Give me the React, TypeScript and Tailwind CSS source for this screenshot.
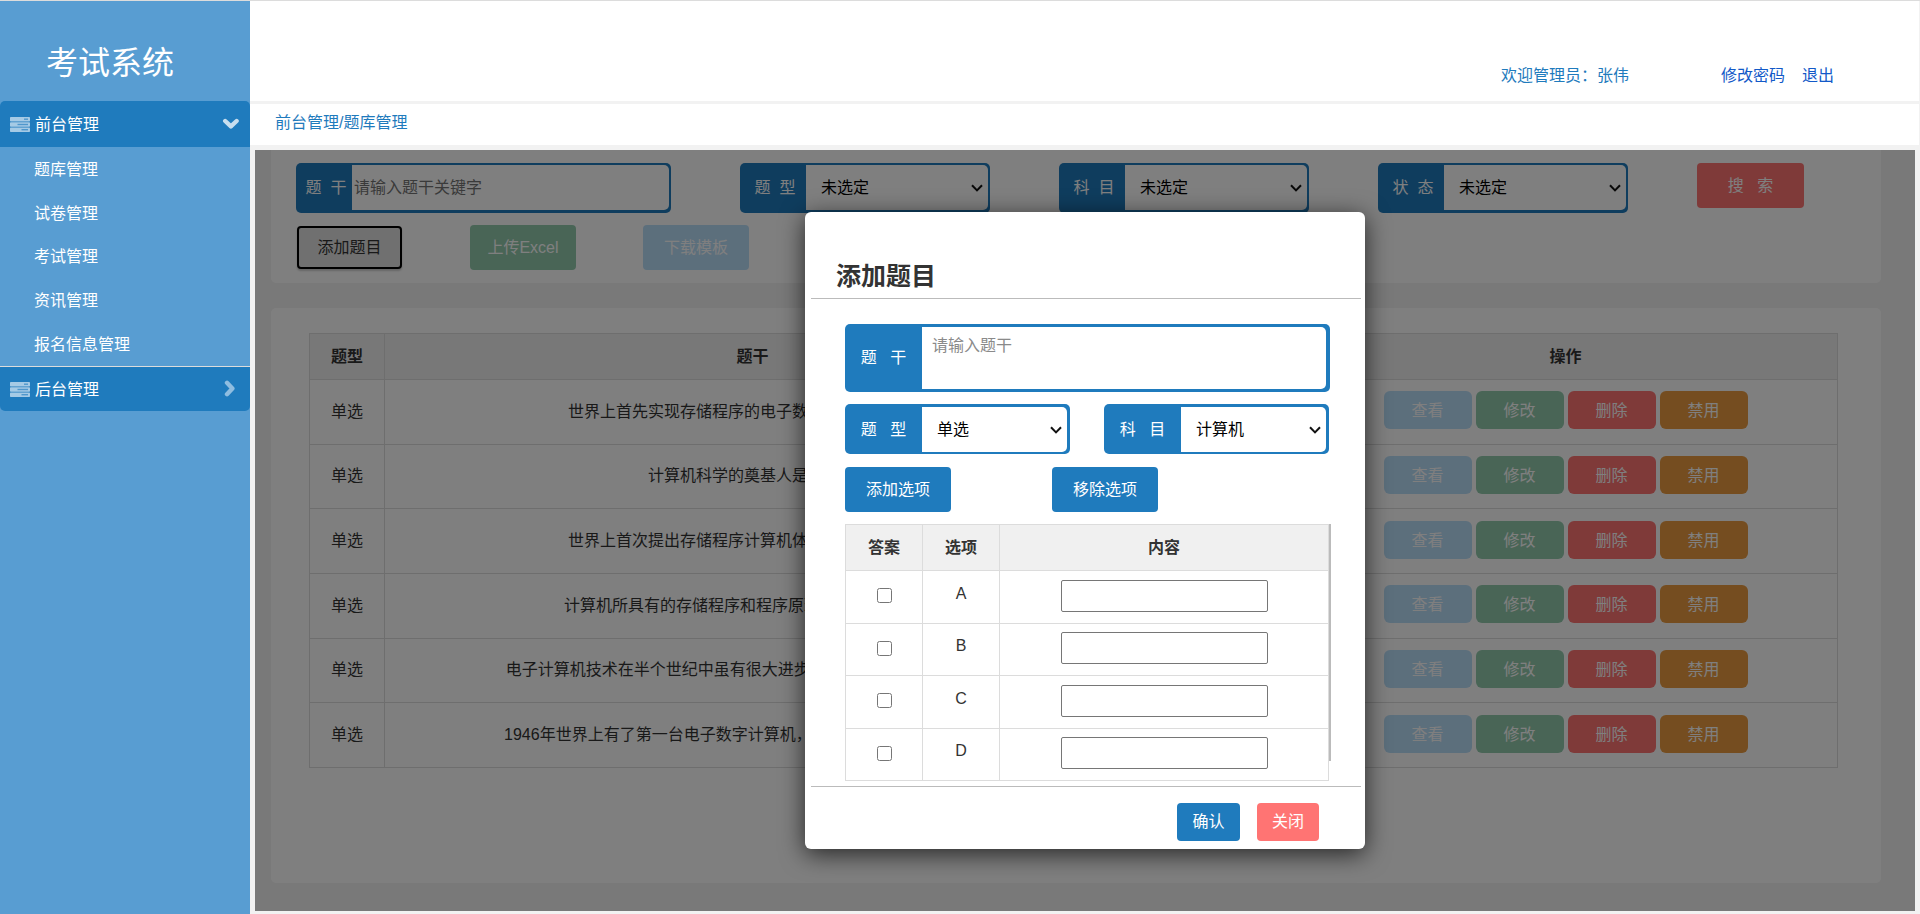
import React, { useState } from 'react';

const menuItems = ['题库管理', '试卷管理', '考试管理', '资讯管理', '报名信息管理'];

const questions = [
  { id: 1, type: '单选', title: '世界上首先实现存储程序的电子数字计算机是（\u00a0\u00a0）。' },
  { id: 2, type: '单选', title: '计算机科学的奠基人是（\u00a0\u00a0）。' },
  { id: 3, type: '单选', title: '世界上首次提出存储程序计算机体系结构的是（\u00a0\u00a0）。' },
  { id: 4, type: '单选', title: '计算机所具有的存储程序和程序原理是（\u00a0\u00a0）提出的。' },
  { id: 5, type: '单选', title: '电子计算机技术在半个世纪中虽有很大进步，至今其运行仍遵循着一...' },
  { id: 6, type: '单选', title: '1946年世界上有了第一台电子数字计算机，奠定了至今仍然在使用的...' }
];

const ServerIcon: React.FC = () => (
  <svg width="20" height="15" viewBox="0 0 20 15" className="shrink-0">
    <g fill="#a5cae5">
      <rect x="0" y="0" width="20" height="4.5" rx="0.7" />
      <rect x="0" y="5.2" width="20" height="4.5" rx="0.7" />
      <rect x="0" y="10.5" width="20" height="4.5" rx="0.7" />
    </g>
    <g fill="#4f97cc">
      <rect x="14" y="1.5" width="4" height="1.4" />
      <rect x="7.5" y="6.8" width="10.5" height="1.4" />
      <rect x="11.5" y="12" width="6.5" height="1.4" />
    </g>
  </svg>
);

const ChevronDown: React.FC = () => (
  <svg width="18" height="12" viewBox="0 0 18 12" fill="none" stroke="#c7deef" strokeWidth="4.4">
    <path d="M3.2 3 L8.9 8.4 L14.6 3" strokeLinecap="round" strokeLinejoin="round" />
  </svg>
);

const ChevronRight: React.FC = () => (
  <svg width="12" height="18" viewBox="0 0 12 18" fill="none" stroke="#8fbde0" strokeWidth="4.4">
    <path d="M3 2.8 L8.4 8.5 L3 14.2" strokeLinecap="round" strokeLinejoin="round" />
  </svg>
);

const SelectBox: React.FC<{ id: string; options: string[] }> = ({ id, options }) => (
  <div className="relative min-w-0 flex-1">
    <select id={id} className="h-full w-full appearance-none rounded-r-[5px] bg-white pl-[15px] text-black">
      {options.map(o => <option key={o}>{o}</option>)}
    </select>
    <svg width="12" height="8" viewBox="0 0 12 8" className="pointer-events-none absolute top-1/2 right-[5px] -mt-1" fill="none" stroke="#111" strokeWidth="2">
      <path d="M1 1.2 L6 6.4 L11 1.2" />
    </svg>
  </div>
);

const FilterSelect: React.FC<{ id: string; label: string }> = ({ id, label }) => (
  <div className="flex h-[50px] w-[250px] rounded-[5px] bg-[#1f7bbd] pt-[2px] pr-[2px] pb-[3px]">
    <label htmlFor={id} className="flex w-[66px] shrink-0 items-center justify-center pl-1 whitespace-pre text-white">{label}</label>
    <SelectBox id={id} options={['未选定']} />
  </div>
);

const ModalSelect: React.FC<{ id: string; label: string; options: string[] }> = ({ id, label, options }) => (
  <div className="flex h-[50px] w-[225px] rounded-[5px] bg-[#1f7bbd] pt-[3px] pr-[3px] pb-[2px]">
    <label htmlFor={id} className="flex w-[77px] shrink-0 items-center justify-center whitespace-pre text-white">{label}</label>
    <SelectBox id={id} options={options} />
  </div>
);

const Sidebar: React.FC = () => (
  <aside className="w-[250px] shrink-0 bg-[#589dd2] text-white">
    <h1 className="flex h-[100px] items-center pt-6 pl-[46px] text-[32px]">考试系统</h1>
    <nav>
      <button className="flex h-[46px] w-full items-center rounded-t-[5px] bg-[#1f7bbd] pr-[10px] pl-[10px]">
        <ServerIcon />
        <span className="ml-[5px] flex-1 pt-[2px] text-left">前台管理</span>
        <ChevronDown />
      </button>
      <ul className="grid h-[219px] auto-rows-fr">
        {menuItems.map(item => (
          <li key={item} className="flex items-center pt-[2px] pl-[34px]">
            <a href="#">{item}</a>
          </li>
        ))}
      </ul>
      <button className="flex h-[45px] w-full items-center rounded-b-[5px] border-t border-[#dcdcdc] bg-[#1f7bbd] pr-[14px] pl-[10px]">
        <ServerIcon />
        <span className="ml-[5px] flex-1 pt-[2px] text-left">后台管理</span>
        <ChevronRight />
      </button>
    </nav>
  </aside>
);

const QuestionTable: React.FC = () => (
  <table className="h-[435px] w-full table-fixed border-collapse text-center text-[#333]">
    <colgroup>
      <col className="w-[75px]" />
      <col />
      <col className="w-[87px]" />
      <col className="w-[86px]" />
      <col className="w-[544px]" />
    </colgroup>
    <thead>
      <tr className="h-[46px] bg-[#f0f0f0]">
        {['题型', '题干', '科目', '状态', '操作'].map(h => (
          <th key={h} className="border border-[#dcdcdc] font-bold">{h}</th>
        ))}
      </tr>
    </thead>
    <tbody>
      {questions.map(q => (
        <tr key={q.id}>
          <td className="border border-[#dcdcdc]">{q.type}</td>
          <td className="border border-[#dcdcdc] whitespace-nowrap">{q.title}</td>
          <td className="border border-[#dcdcdc]">计算机</td>
          <td className="border border-[#dcdcdc]">启用</td>
          <td className="border border-[#dcdcdc] pb-[3px]">
            <div className="flex justify-center gap-1 text-white">
              <button className="h-[38px] w-[88px] rounded-md bg-[#b9def9] pt-[2px]">查看</button>
              <button className="h-[38px] w-[88px] rounded-md bg-[#92caad] pt-[2px]">修改</button>
              <button className="h-[38px] w-[88px] rounded-md bg-[#ff7473] pt-[2px]">删除</button>
              <button className="h-[38px] w-[88px] rounded-md bg-[#ea9a40] pt-[2px]">禁用</button>
            </div>
          </td>
        </tr>
      ))}
    </tbody>
  </table>
);

const AddQuestionModal: React.FC<{ onClose: () => void }> = ({ onClose }) => {
  const [options, setOptions] = useState(['A', 'B', 'C', 'D']);

  const addOption = () => setOptions([...options, String.fromCharCode(65 + options.length)]);

  return (
    <div role="dialog" aria-labelledby="modal-title" className="h-fit w-[560px] rounded-md bg-white pr-1 pb-2 pl-[6px] text-[#333] shadow-[0_5px_25px_rgba(0,0,0,0.7)]">
      <h2 id="modal-title" className="flex h-[87px] items-end border-b border-[#bbb] pb-[6px] pl-[25px] text-[25px] leading-8 font-bold">添加题目</h2>
      <div className="pt-[25px] pr-[30px] pb-[5px] pl-[34px]">
        <div className="mr-px flex h-[68px] rounded-[5px] bg-[#1f7bbd] py-[3px] pr-[4px]">
          <label htmlFor="stem" className="flex w-[77px] shrink-0 items-center justify-center whitespace-pre text-white">{'题   干'}</label>
          <textarea id="stem" placeholder="请输入题干" className="min-w-0 flex-1 resize-none rounded-r-[5px] bg-white px-[10px] py-[7px] placeholder:text-[#8a8a8a]" />
        </div>
        <div className="mt-3 mr-[2px] flex justify-between">
          <ModalSelect id="type" label={'题   型'} options={['单选', '多选', '判断']} />
          <ModalSelect id="subject" label={'科   目'} options={['计算机']} />
        </div>
        <div className="mt-[13px] flex gap-[101px] text-white">
          <button onClick={addOption} className="h-[45px] w-[106px] rounded bg-[#1f7bbd]">添加选项</button>
          <button onClick={() => setOptions(options.slice(0, -1))} className="h-[45px] w-[106px] rounded bg-[#1f7bbd]">移除选项</button>
        </div>
        <div className="mt-3 flex items-start">
          <table className="h-[257px] min-w-0 flex-1 table-fixed border-collapse text-center">
            <colgroup>
              <col className="w-[77px]" />
              <col className="w-[77px]" />
              <col />
            </colgroup>
            <thead>
              <tr className="h-[46px] bg-[#f0f0f0]">
                {['答案', '选项', '内容'].map(h => (
                  <th key={h} className="border border-[#dcdcdc] font-bold">{h}</th>
                ))}
              </tr>
            </thead>
            <tbody>
              {options.map(o => (
                <tr key={o}>
                  <td className="border border-[#dcdcdc] pb-[2px]">
                    <input type="checkbox" aria-label={`答案${o}`} className="mx-auto block h-[15px] w-[15px]" />
                  </td>
                  <td className="border border-[#dcdcdc] pb-[6px]">{o}</td>
                  <td className="border border-[#dcdcdc] pb-[2px]">
                    <input type="text" aria-label={`内容${o}`} className="mx-auto block h-8 w-[207px] rounded-[2px] border border-[#767676] px-1" />
                  </td>
                </tr>
              ))}
            </tbody>
          </table>
          <div className="h-[237px] w-[2px] bg-[#bbb]" />
        </div>
      </div>
      <div className="flex justify-end gap-[17px] border-t border-[#bbb] pt-4 pr-[42px] text-white">
        <button className="h-[38px] w-[63px] rounded bg-[#1f7bbd]">确认</button>
        <button onClick={onClose} className="h-[38px] w-[62px] rounded bg-[#ff7473]">关闭</button>
      </div>
    </div>
  );
};

export default function App() {
  const [isModalOpen, setIsModalOpen] = useState(true);

  return (
    <div className="flex min-h-screen border-t border-[#dcdcdc] bg-[#f2f2f2] font-['Liberation_Sans','Noto_Sans_CJK_SC',sans-serif] text-base">
      <Sidebar />
      <div className="flex min-w-0 flex-1 flex-col">
        <header className="mr-px flex h-[100px] items-end justify-end bg-white pr-[85px] pb-[13px]">
          <span className="mr-[92px] text-[#1f7bbd]">欢迎管理员：张伟</span>
          <div className="flex gap-[17px] text-[#1259c8]">
            <a href="#">修改密码</a>
            <a href="#">退出</a>
          </div>
        </header>
        <div className="mt-[3px] mr-px flex h-[41px] items-center bg-white pb-1 pl-[25px] text-[#1f7bbd]">前台管理/题库管理</div>

        <main className="relative mx-[5px] mt-[5px] mb-[3px] flex-1 pr-[34px] pb-7 pl-4">
          <section className="h-[133px] rounded-b-[5px] bg-white px-[25px] pt-[13px]">
            <div className="flex gap-[69px]">
              <div className="flex h-[50px] w-[375px] rounded-[5px] bg-[#1f7bbd] pt-[2px] pr-[2px] pb-[3px]">
                <label htmlFor="keyword" className="flex w-14 shrink-0 items-center justify-center pl-1 whitespace-pre text-white">{'题  干'}</label>
                <input id="keyword" type="text" placeholder="请输入题干关键字" className="min-w-0 flex-1 rounded-r-[5px] bg-white px-[2px] placeholder:text-[#757575]" />
              </div>
              <FilterSelect id="filter-type" label={'题  型'} />
              <FilterSelect id="filter-subject" label={'科  目'} />
              <FilterSelect id="filter-state" label={'状  态'} />
              <button className="h-[45px] w-[107px] rounded bg-[#ff7473] whitespace-pre text-white">{'搜   索'}</button>
            </div>
            <div className="mt-3 flex items-center gap-[67px] text-white">
              <button onClick={() => setIsModalOpen(true)} className="mx-px h-[43px] w-[105px] rounded border-2 border-black bg-[#e0e0e0] text-[#333] shadow-[0_2px_2px_rgba(0,0,0,0.2)]">添加题目</button>
              <button className="h-[45px] w-[106px] rounded bg-[#92caad]">上传Excel</button>
              <button className="h-[45px] w-[106px] rounded bg-[#b9def9]">下载模板</button>
            </div>
          </section>

          <section className="mt-[25px] min-h-[575px] rounded-[5px] bg-white pt-[25px] pr-[43px] pl-[38px]">
            <QuestionTable />
          </section>

          {isModalOpen && (
            <div className="absolute inset-0 flex justify-center bg-black/50 pt-[62px]">
              <AddQuestionModal onClose={() => setIsModalOpen(false)} />
            </div>
          )}
        </main>
      </div>
    </div>
  );
}
